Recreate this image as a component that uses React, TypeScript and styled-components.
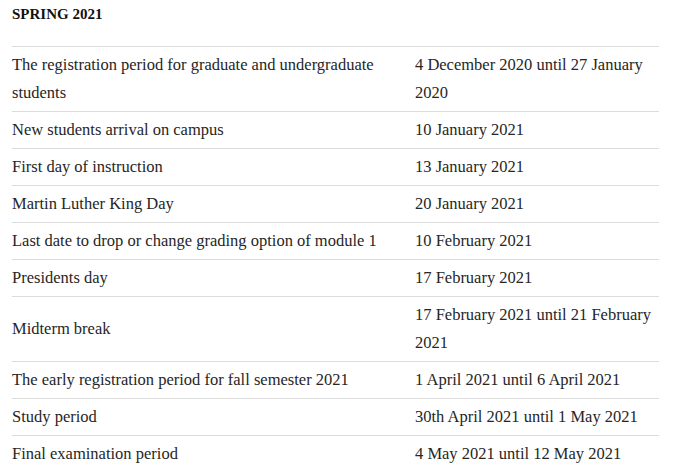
import React from "react";
import styled, { createGlobalStyle } from "styled-components";

const Global = createGlobalStyle`
  html, body { margin: 0; padding: 0; background: #fff; }
  body { font-family: "Liberation Serif", "Times New Roman", serif; color: #222; }
`;

const Page = styled.div`
  padding: 4px 14px 0 12px;
  width: 647px;
`;

const Heading = styled.h3`
  margin: 0 0 22px;
  font-size: 15px;
  line-height: 20px;
  font-weight: 700;
  color: #111;
`;

const Table = styled.div`
  display: grid;
  grid-template-columns: 391px 1fr;
  border-top: 1px solid #dcdcdc;
`;

const Cell = styled.div<{ $second?: boolean }>`
  display: flex;
  align-items: center;
  padding: 4px 0 4px ${(p) => (p.$second ? "12px" : "0")};
  font-size: 16.5px;
  line-height: 28px;
  border-bottom: 1px solid #dcdcdc;
  color: #262626;
`;

const rows: [string, string][] = [
  ["The registration period for graduate and undergraduate students", "4 December 2020 until 27 January 2020"],
  ["New students arrival on campus", "10 January 2021"],
  ["First day of instruction", "13 January 2021"],
  ["Martin Luther King Day", "20 January 2021"],
  ["Last date to drop or change grading option of module 1", "10 February 2021"],
  ["Presidents day", "17 February 2021"],
  ["Midterm break", "17 February 2021 until 21 February 2021"],
  ["The early registration period for fall semester 2021", "1 April 2021 until 6 April 2021"],
  ["Study period", "30th April 2021 until 1 May 2021"],
  ["Final examination period", "4 May 2021 until 12 May 2021"],
];

export default function App() {
  return (
    <>
      <Global />
      <Page>
        <Heading>SPRING 2021</Heading>
        <Table>
          {rows.map(([a, b]) => (
            <React.Fragment key={a}>
              <Cell>{a}</Cell>
              <Cell $second>{b}</Cell>
            </React.Fragment>
          ))}
        </Table>
      </Page>
    </>
  );
}
